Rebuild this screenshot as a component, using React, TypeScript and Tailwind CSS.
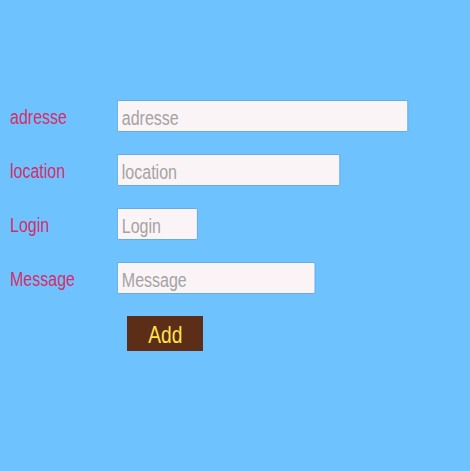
import { useState } from 'react';

const fields = [
    { name: 'adresse', label: 'adresse', width: 291 },
    { name: 'location', label: 'location', width: 223 },
    { name: 'login', label: 'Login', width: 81 },
    { name: 'message', label: 'Message', width: 198 },
];

// the reference uses a narrow face, squeeze Liberation Sans to match
const SCALE = 0.8;

export default function App() {
    const [values, setValues] = useState<Record<string, string>>({});

    return (
        <div className="min-h-[471px] w-full bg-[#6ec3ff] pt-[100px] font-['Liberation_Sans',Arial,sans-serif]">
            <form
                className="flex flex-col gap-[22px]"
                onSubmit={(e) => e.preventDefault()}
            >
                {fields.map((field) => (
                    <div key={field.name} className="flex h-8 items-center">
                        <label
                            htmlFor={field.name}
                            className="w-[117px] pl-[10px] pt-[2px] text-[20px] leading-none text-[#d52d69]"
                        >
                            <span className="inline-block origin-left scale-x-[0.8]">
                                {field.label}
                            </span>
                        </label>
                        <div className="h-8" style={{ width: field.width }}>
                            <input
                                id={field.name}
                                name={field.name}
                                placeholder={field.label}
                                value={values[field.name] ?? ''}
                                onChange={(e) =>
                                    setValues({ ...values, [field.name]: e.target.value })
                                }
                                className="h-8 origin-left scale-x-[0.8] rounded-[2px] border border-[#5ba6e2] bg-[#fbf4f6] px-[5px] pt-[4px] text-[20px] leading-none text-[#555] outline-none placeholder:text-[#a3a3a3]"
                                style={{ width: field.width / SCALE }}
                            />
                        </div>
                    </div>
                ))}
                <div className="pl-[127px]">
                    <button
                        type="submit"
                        className="flex h-[35px] w-[76px] items-center justify-center bg-[#5c2e17] pt-[3px] text-[24px] leading-none text-[#ffe34f]"
                    >
                        <span className="inline-block scale-x-[0.8]">Add</span>
                    </button>
                </div>
            </form>
        </div>
    );
}
